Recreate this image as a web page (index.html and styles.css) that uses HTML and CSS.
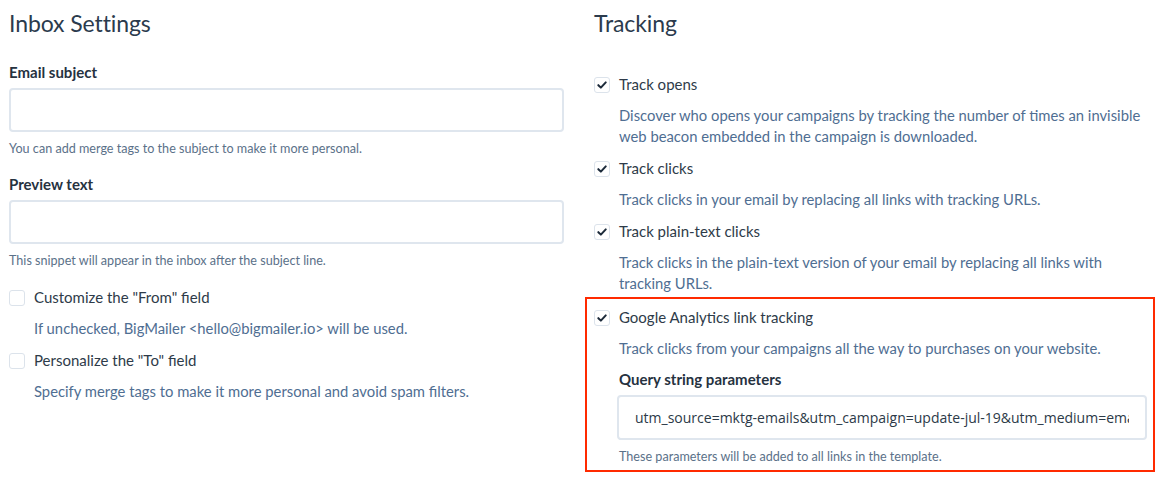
FILE: index.html
```html
<!DOCTYPE html>
<html lang="en">
<head>
  <meta charset="UTF-8">
  <title>Campaign settings</title>
  <link rel="stylesheet" href="styles.css">
</head>
<body>

<div class="settings">
  <div class="col">
    <h2>Inbox Settings</h2>

    <div class="field first">
      <label class="field-label">Email subject</label>
      <input type="text" class="text-input">
      <div class="help">You can add merge tags to the subject to make it more personal.</div>
    </div>

    <div class="field">
      <label class="field-label">Preview text</label>
      <input type="text" class="text-input">
      <div class="help">This snippet will appear in the inbox after the subject line.</div>
    </div>

    <div class="options left-options">
      <div class="option">
        <label class="check-row"><span class="box"></span>Customize the "From" field</label>
        <div class="desc">If unchecked, BigMailer &lt;hello@bigmailer.io&gt; will be used.</div>
      </div>
      <div class="option">
        <label class="check-row"><span class="box"></span>Personalize the "To" field</label>
        <div class="desc">Specify merge tags to make it more personal and avoid spam filters.</div>
      </div>
    </div>
  </div>

  <div class="col">
    <h2>Tracking</h2>

    <div class="options right-options">
      <div class="option">
        <label class="check-row"><span class="box checked"><svg viewBox="0 0 16 16"><path d="M3.8 8.2l2.9 2.8 5.6-6"/></svg></span>Track opens</label>
        <div class="desc">Discover who opens your campaigns by tracking the number of times an invisible web beacon embedded in the campaign is downloaded.</div>
      </div>
      <div class="option">
        <label class="check-row"><span class="box checked"><svg viewBox="0 0 16 16"><path d="M3.8 8.2l2.9 2.8 5.6-6"/></svg></span>Track clicks</label>
        <div class="desc">Track clicks in your email by replacing all links with tracking URLs.</div>
      </div>
      <div class="option">
        <label class="check-row"><span class="box checked"><svg viewBox="0 0 16 16"><path d="M3.8 8.2l2.9 2.8 5.6-6"/></svg></span>Track plain-text clicks</label>
        <div class="desc">Track clicks in the plain-text version of your email by replacing all links with tracking URLs.</div>
      </div>

      <div class="option highlight">
        <label class="check-row"><span class="box checked"><svg viewBox="0 0 16 16"><path d="M3.8 8.2l2.9 2.8 5.6-6"/></svg></span>Google Analytics link tracking</label>
        <div class="desc">Track clicks from your campaigns all the way to purchases on your website.</div>
        <div class="sub-field">
          <label class="field-label">Query string parameters</label>
          <input type="text" class="text-input query" value="utm_source=mktg-emails&amp;utm_campaign=update-jul-19&amp;utm_medium=email">
          <div class="help">These parameters will be added to all links in the template.</div>
        </div>
      </div>
    </div>
  </div>
</div>

</body>
</html>
```

FILE: styles.css
```css
body {
  margin: 0;
  padding: 8px 11px 0 9px;
  background: white;
  font-family: Lato, "Open Sans", sans-serif;
  color: #2c3a48;
}
.settings {
  display: grid;
  grid-template-columns: 555px 555px;
  column-gap: 30px;
}
h2 {
  margin: 0;
  font-size: 23px;
  line-height: 30px;
  font-weight: 400;
  letter-spacing: -0.1px;
  color: #2b3b4d;
}
.field {
  margin-top: 16px;
}
.field.first {
  margin-top: 24px;
}
.field-label {
  display: block;
  font-size: 15px;
  line-height: 21px;
  font-weight: 700;
  color: #26323f;
}
.text-input {
  display: block;
  box-sizing: border-box;
  width: 100%;
  height: 44px;
  margin-top: 5px;
  border: 2px solid #dfe6ee;
  border-radius: 4px;
  background: white;
  padding: 0 16px;
  font-family: "Open Sans", sans-serif;
  font-size: 14px;
  color: #2c3a48;
  outline: none;
}
.help {
  margin-top: 7px;
  font-size: 12.6px;
  line-height: 19px;
  color: #5b7189;
}
.left-options {
  margin-top: 17px;
}
.right-options {
  margin-top: 36px;
}
.option + .option {
  margin-top: 11px;
}
.check-row {
  display: flex;
  align-items: center;
  gap: 9px;
  font-size: 15px;
  line-height: 21px;
  color: #2e3b49;
}
.box {
  flex: none;
  box-sizing: border-box;
  width: 16px;
  height: 16px;
  border: 1px solid #dce3eb;
  border-radius: 3px;
  background: white;
}
.box svg {
  display: block;
  width: 14px;
  height: 14px;
}
.box svg path {
  fill: none;
  stroke: #1c2a3a;
  stroke-width: 2.3;
  stroke-linecap: round;
  stroke-linejoin: round;
}
.desc {
  margin-top: 10px;
  padding-left: 25px;
  font-size: 14.8px;
  line-height: 21px;
  color: #4f6e92;
}
.option.highlight {
  margin: 3px -6px 0 -9px;
  padding: 8px 4px 4px 7px;
  border: 2px solid #ff2a00;
}
.sub-field {
  margin-top: 10px;
  padding-left: 25px;
}
.text-input.query {
  margin-left: -2px;
  margin-top: 5px;
  height: 45px;
}
.sub-field .help {
  margin-top: 7px;
}
```
